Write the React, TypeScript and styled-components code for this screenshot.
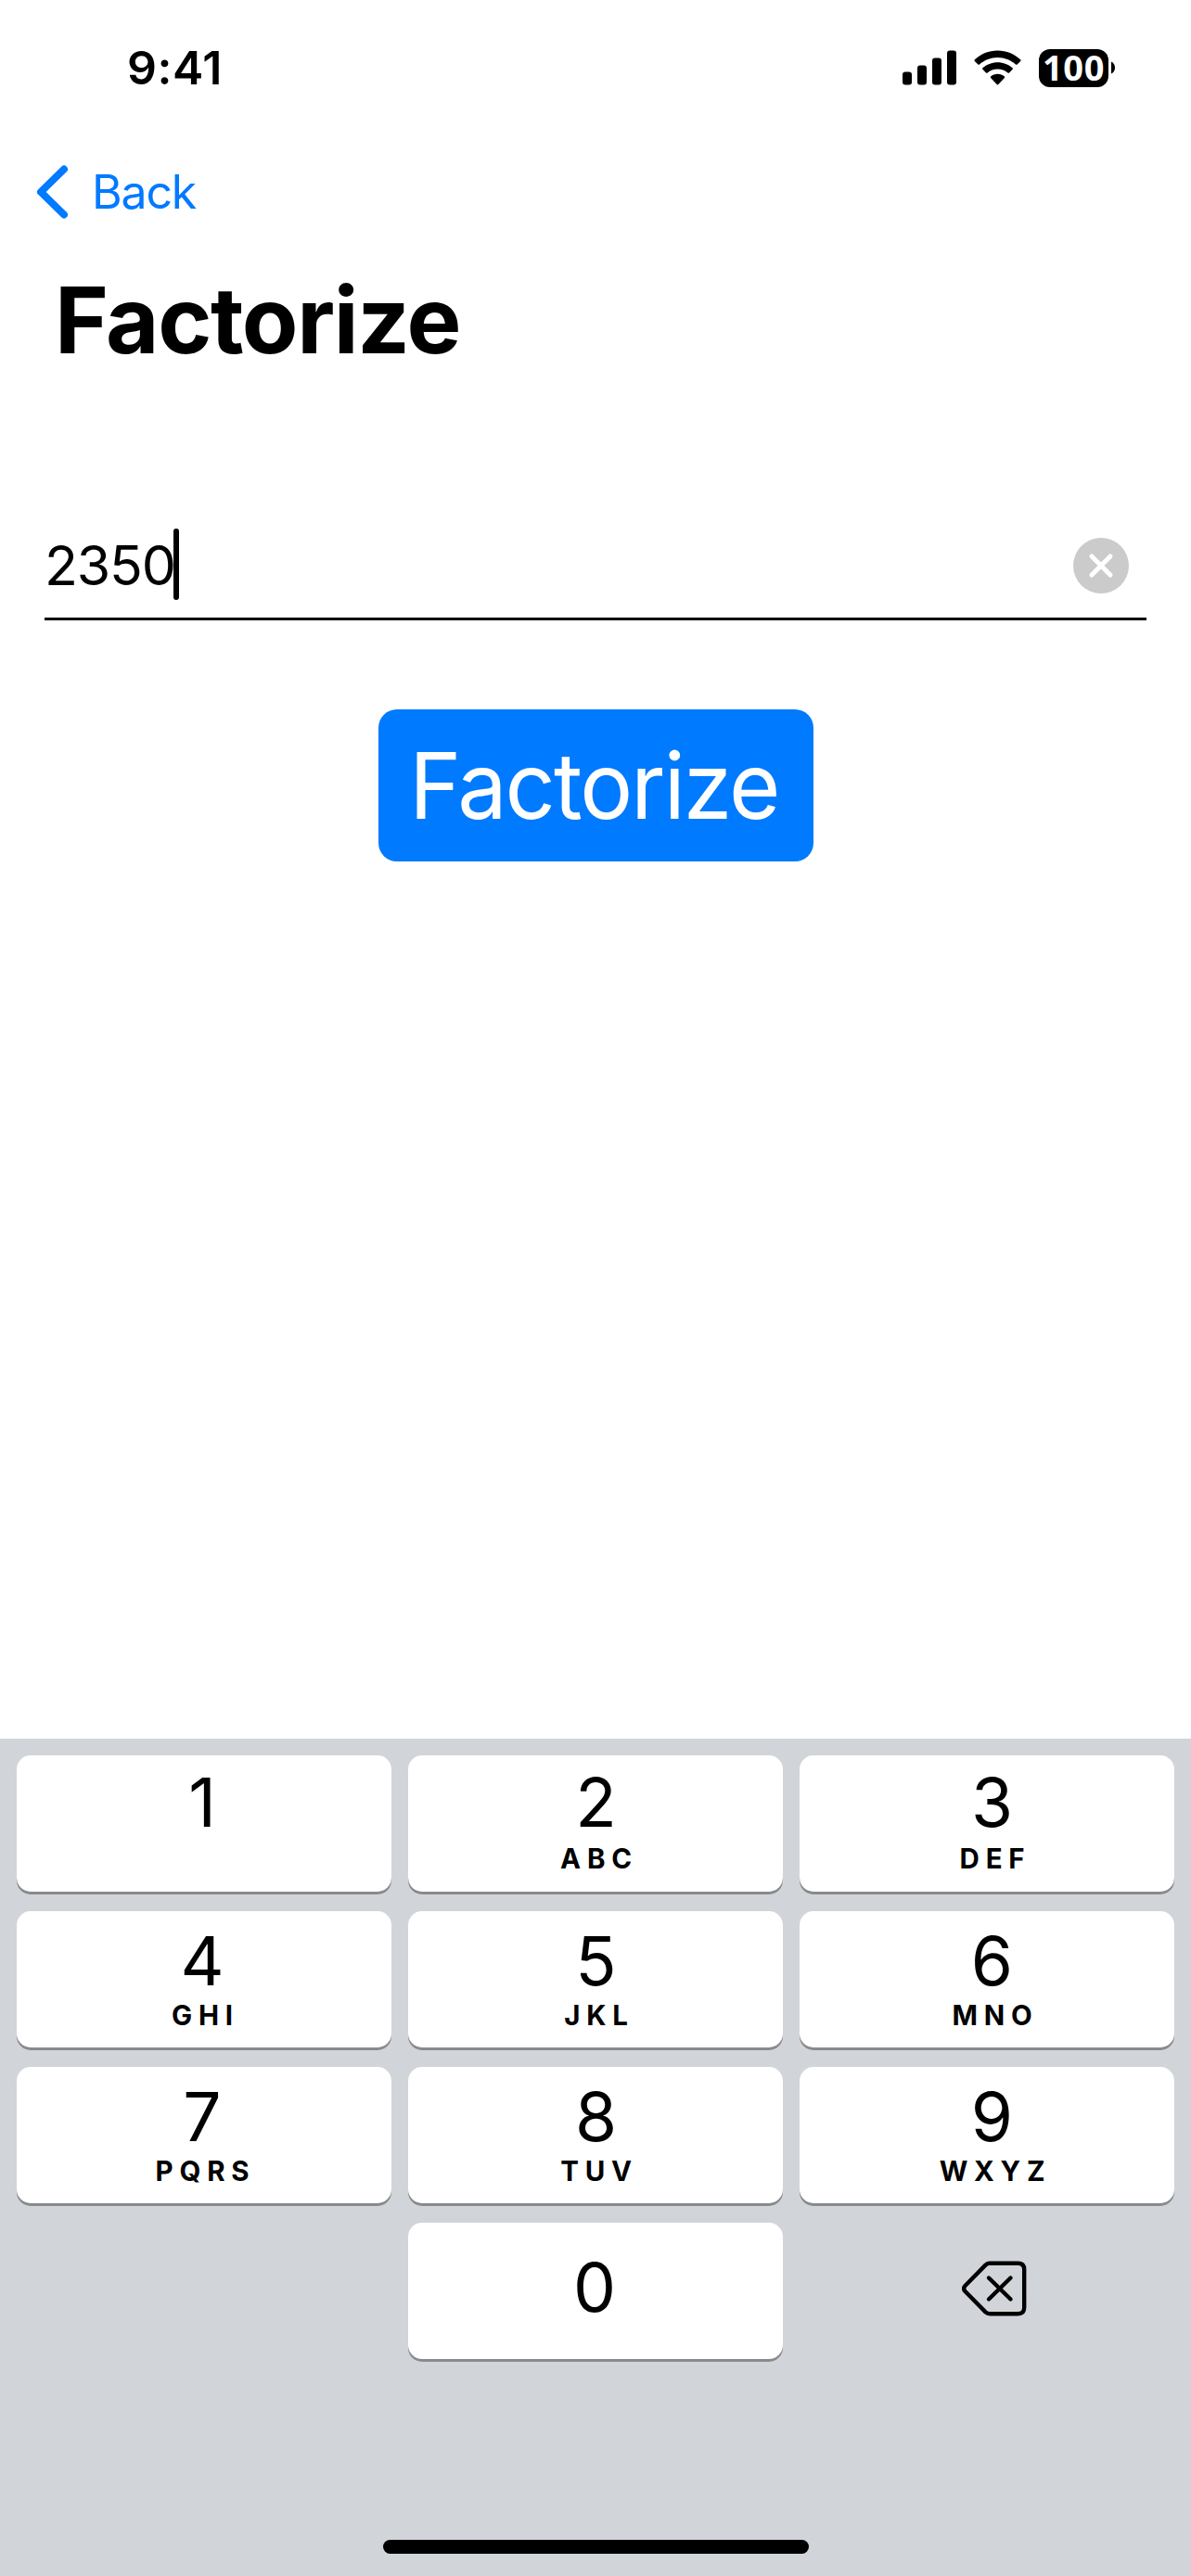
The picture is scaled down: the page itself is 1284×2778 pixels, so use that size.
import React, { useState } from "react";
import styled, { createGlobalStyle } from "styled-components";

const GlobalStyle = createGlobalStyle`
  * { box-sizing: border-box; }
  body {
    margin: 0;
    background: #fff;
    color: #000;
    font-family: Inter, "Liberation Sans", sans-serif;
  }
  button {
    margin: 0;
    padding: 0;
    border: 0;
    background: none;
    color: inherit;
    font: inherit;
  }
`;

const Screen = styled.main`
  width: 1284px;
  height: 2778px;
  display: flex;
  flex-direction: column;
  background: #fff;
  overflow: hidden;
`;

const StatusBar = styled.header`
  height: 146px;
  flex: none;
  display: flex;
  align-items: center;
  justify-content: space-between;
  padding: 0 82px 0 137px;
`;

const Clock = styled.time`
  font-size: 50px;
  font-weight: 600;
  line-height: 60px;
  letter-spacing: 0.5px;
`;

const StatusIcons = styled.div`
  display: flex;
  align-items: center;
  gap: 19px;
`;

const Battery = styled.div`
  display: flex;
  align-items: center;
  gap: 3px;
`;

const BatteryBody = styled.div`
  width: 75px;
  height: 41px;
  padding-bottom: 3px;
  border-radius: 12px;
  background: #000;
  color: #fff;
  display: flex;
  align-items: center;
  justify-content: center;
  font-family: "Noto Sans", "Open Sans", sans-serif;
  font-size: 38px;
  font-weight: 700;
  line-height: 38px;
  letter-spacing: 0.6px;
`;

const NavBar = styled.nav`
  height: 122px;
  flex: none;
  display: flex;
  align-items: center;
  padding-left: 39px;
`;

const BackButton = styled.button`
  display: flex;
  align-items: center;
  gap: 25px;
  color: #007aff;
  font-size: 50px;
  line-height: 60px;
  letter-spacing: -1.2px;
`;

const Title = styled.h1`
  margin: 0;
  height: 154px;
  flex: none;
  padding-left: 59px;
  font-size: 99px;
  font-weight: 700;
  line-height: 154px;
  letter-spacing: -1.4px;
`;

const Field = styled.div`
  height: 115px;
  flex: none;
  margin: 132px 48px 0;
  padding: 0 19px 0 0;
  border-bottom: 3px solid #000;
  display: flex;
  align-items: center;
  justify-content: space-between;
`;

const Entry = styled.div`
  display: flex;
  align-items: center;
`;

const Value = styled.span`
  font-size: 59px;
  line-height: 72px;
  letter-spacing: -1.2px;
`;

const Caret = styled.span`
  width: 6px;
  height: 77px;
  margin: 0 0 3px -2px;
  border-radius: 3px;
  background: #000;
`;

const ClearButton = styled.button`
  width: 60px;
  height: 60px;
  display: flex;
`;

const SubmitButton = styled.button`
  width: 469px;
  height: 164px;
  flex: none;
  margin: 96px 0 0 408px;
  border-radius: 20px;
  background: #007aff;
  color: #fff;
  font-size: 99px;
  line-height: 164px;
  letter-spacing: -2px;
`;

const SubmitLabel = styled.span`
  display: inline-block;
  transform: translateX(-2px) scaleX(0.96);
`;

const Keyboard = styled.section`
  height: 903px;
  flex: none;
  margin-top: auto;
  padding: 18px 18px 24px;
  background: #d1d4d9;
  display: flex;
  flex-direction: column;
  align-items: center;
  justify-content: space-between;
`;

const KeyGrid = styled.div`
  display: grid;
  grid-template-columns: repeat(3, 404px);
  grid-auto-rows: 147px;
  gap: 21px 18px;
`;

const Key = styled.button<{ $inset: number; $top: number }>`
  display: flex;
  flex-direction: column;
  align-items: center;
  padding-top: ${({ $top }) => $top}px;
  padding-left: ${({ $inset }) => Math.max($inset, 0)}px;
  padding-right: ${({ $inset }) => Math.max(-$inset, 0)}px;
  border-radius: 15px;
  background: #fff;
  box-shadow: 0 3px 0 #898a8d;
`;

const Digit = styled.span`
  font-size: 73px;
  line-height: 73px;
`;

const Letters = styled.span<{ $raise: number }>`
  margin-top: ${({ $raise }) => 8 - $raise}px;
  padding-left: 7px;
  font-size: 29.5px;
  font-weight: 700;
  line-height: 30px;
  letter-spacing: 6.8px;
`;

const DeleteKey = styled.button`
  display: flex;
  align-items: center;
  justify-content: center;
  padding: 0 0 5px 16px;
`;

const HomeIndicator = styled.div`
  width: 459px;
  height: 15px;
  border-radius: 8px;
  background: #000;
`;

const SignalIcon = () => (
  <svg width="58" height="38" viewBox="0 0 58 38">
    <rect x="0" y="23.5" width="10" height="14" rx="3" />
    <rect x="16" y="16.5" width="10" height="21" rx="3" />
    <rect x="32" y="8.5" width="10" height="29" rx="3" />
    <rect x="48" y="0.5" width="10" height="37" rx="3" />
  </svg>
);

const WifiIcon = () => (
  <svg width="51" height="38" viewBox="0 0 51 38">
    <path d="M25.5 0.5C35 0.5 43.7 4.2 50.2 10.3Q51 11.1 50.2 11.9L46.6 15.5Q45.8 16.2 45 15.5C39.8 10.9 33 8 25.5 8S11.2 10.9 6 15.5Q5.2 16.2 4.4 15.5L0.8 11.9Q0 11.1 0.8 10.3C7.3 4.2 16 0.5 25.5 0.5Z" />
    <path d="M25.5 13.2C31.7 13.2 37.3 15.5 41.6 19.3Q42.4 20 41.6 20.8L38 24.4Q37.2 25.1 36.4 24.4C33.5 21.9 29.7 20.4 25.5 20.4S17.5 21.9 14.6 24.4Q13.8 25.1 13 24.4L9.4 20.8Q8.6 20 9.4 19.3C13.7 15.5 19.3 13.2 25.5 13.2Z" />
    <path d="M25.5 25.8C28.3 25.8 30.9 26.8 32.9 28.4Q33.7 29.1 32.9 29.9L26.3 37Q25.5 37.8 24.7 37L18.1 29.9Q17.3 29.1 18.1 28.4C20.1 26.8 22.7 25.8 25.5 25.8Z" />
  </svg>
);

const BatteryTip = () => (
  <svg width="4" height="14" viewBox="0 0 4 14">
    <path d="M0 0.5C2.4 1.5 4 4 4 7S2.4 12.5 0 13.5Z" />
  </svg>
);

const ChevronIcon = () => (
  <svg width="35" height="60" viewBox="0 0 35 60" fill="none" stroke="currentColor" strokeWidth="8" strokeLinecap="round" strokeLinejoin="round">
    <path d="M30 5.5L5 30L30 54.5" />
  </svg>
);

const ClearIcon = () => (
  <svg width="60" height="60" viewBox="0 0 60 60">
    <circle cx="30" cy="30" r="30" fill="#cbcbcb" />
    <path d="M20 20L40 40M40 20L20 40" stroke="#fff" strokeWidth="5" strokeLinecap="round" />
  </svg>
);

const DeleteIcon = () => (
  <svg width="70" height="60" viewBox="0 0 70 60" fill="none" stroke="#000" strokeWidth="4.4" strokeLinecap="round" strokeLinejoin="round">
    <path d="M30 2.8H60.5Q67.2 2.8 67.2 9.5V50.5Q67.2 57.2 60.5 57.2H30Q27.5 57.2 25.5 55.4L3.5 33Q0.8 30 3.5 27L25.5 4.6Q27.5 2.8 30 2.8Z" />
    <path d="M29 18.5L52.5 41.5M52.5 18.5L29 41.5" />
  </svg>
);

const keys = [
  ["1", ""],
  ["2", "ABC"],
  ["3", "DEF"],
  ["4", "GHI"],
  ["5", "JKL"],
  ["6", "MNO"],
  ["7", "PQRS"],
  ["8", "TUV"],
  ["9", "WXYZ"],
];

const columnInset = [-4, 1, 11];

export default function App() {
  const [value, setValue] = useState("2350");
  const press = (digit: string) => setValue((v) => v + digit);

  return (
    <>
      <GlobalStyle />
      <Screen>
        <StatusBar>
          <Clock>9:41</Clock>
          <StatusIcons>
            <SignalIcon />
            <WifiIcon />
            <Battery>
              <BatteryBody>100</BatteryBody>
              <BatteryTip />
            </Battery>
          </StatusIcons>
        </StatusBar>
        <NavBar>
          <BackButton>
            <ChevronIcon />
            Back
          </BackButton>
        </NavBar>
        <Title>Factorize</Title>
        <Field>
          <Entry>
            <Value>{value}</Value>
            <Caret />
          </Entry>
          <ClearButton aria-label="Clear" onClick={() => setValue("")}>
            <ClearIcon />
          </ClearButton>
        </Field>
        <SubmitButton>
          <SubmitLabel>Factorize</SubmitLabel>
        </SubmitButton>
        <Keyboard>
          <KeyGrid>
            {keys.map(([digit, letters], i) => (
              <Key
                key={digit}
                $inset={columnInset[i % 3]}
                $top={i < 3 ? 14 : 17}
                onClick={() => press(digit)}
              >
                <Digit>{digit}</Digit>
                {letters && <Letters $raise={i < 3 ? -1 : 1}>{letters}</Letters>}
              </Key>
            ))}
            <span />
            <Key $inset={-2} $top={33} onClick={() => press("0")}>
              <Digit>0</Digit>
            </Key>
            <DeleteKey aria-label="Delete" onClick={() => setValue((v) => v.slice(0, -1))}>
              <DeleteIcon />
            </DeleteKey>
          </KeyGrid>
          <HomeIndicator />
        </Keyboard>
      </Screen>
    </>
  );
}
